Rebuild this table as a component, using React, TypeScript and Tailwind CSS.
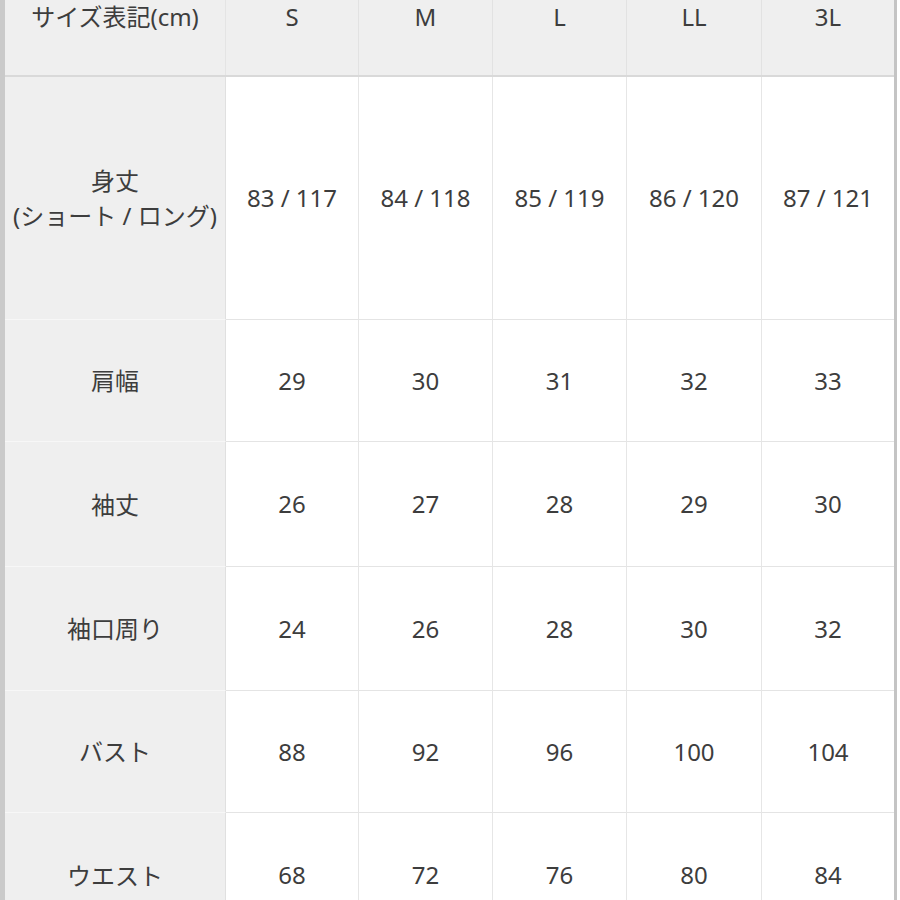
import React from "react";

const sizes = ["S", "M", "L", "LL", "3L"];

// widths of each column (px), first one is the label column
const colClass = ["w-[221px]", "w-[133px]", "w-[134px]", "w-[134px]", "w-[135px]", "w-[132px]"];

interface Row {
  label: React.ReactNode;
  values: string[];
  height: string;
}

const rows: Row[] = [
  {
    label: (
      <>
        <span>身丈</span>
        <span>(ショート / ロング)</span>
      </>
    ),
    values: ["83 / 117", "84 / 118", "85 / 119", "86 / 120", "87 / 121"],
    height: "h-[243px]",
  },
  { label: "肩幅", values: ["29", "30", "31", "32", "33"], height: "h-[122px]" },
  { label: "袖丈", values: ["26", "27", "28", "29", "30"], height: "h-[125px]" },
  { label: "袖口周り", values: ["24", "26", "28", "30", "32"], height: "h-[124px]" },
  { label: "バスト", values: ["88", "92", "96", "100", "104"], height: "h-[122px]" },
  { label: "ウエスト", values: ["68", "72", "76", "80", "84"], height: "h-[124px]" },
];

const App: React.FC = () => {
  return (
    <div
      className="w-[900px] h-[900px] overflow-hidden bg-white text-[24px] text-[#3d3d3d]"
      style={{ fontFamily: '"Noto Sans", "Noto Sans CJK JP", sans-serif' }}
    >
      <div className="w-[897px] border-l-[5px] border-r-[3px] border-l-[#cacaca] border-r-[#c4c4c4]">
        {/* header */}
        <div className="flex h-[77px] bg-[#efefef] border-b-2 border-[#d9d9d9]">
          <div className={`${colClass[0]} flex justify-center leading-[34px] border-r border-[#e4e4e4]`}>
            サイズ表記(cm)
          </div>
          {sizes.map((s, i) => (
            <div
              key={s}
              className={`${colClass[i + 1]} flex justify-center leading-[34px] ${
                i < sizes.length - 1 ? "border-r border-[#e2e2e2]" : ""
              }`}
            >
              {s}
            </div>
          ))}
        </div>

        {rows.map((row, r) => (
          <div key={r} className={`flex ${row.height}`}>
            <div
              className={`${colClass[0]} flex flex-col items-center justify-center leading-[35px] bg-[#efefef] border-r border-[#e0e0e0] ${
                r < rows.length - 1 ? "border-b border-b-[#f7f7f7]" : ""
              }`}
            >
              {row.label}
            </div>
            {row.values.map((v, i) => (
              <div
                key={i}
                className={`${colClass[i + 1]} flex items-center justify-center ${
                  i < row.values.length - 1 ? "border-r border-[#e6e6e6]" : ""
                } ${r < rows.length - 1 ? "border-b border-b-[#e4e4e4]" : ""}`}
              >
                {v}
              </div>
            ))}
          </div>
        ))}
      </div>
    </div>
  );
};

export default App;
